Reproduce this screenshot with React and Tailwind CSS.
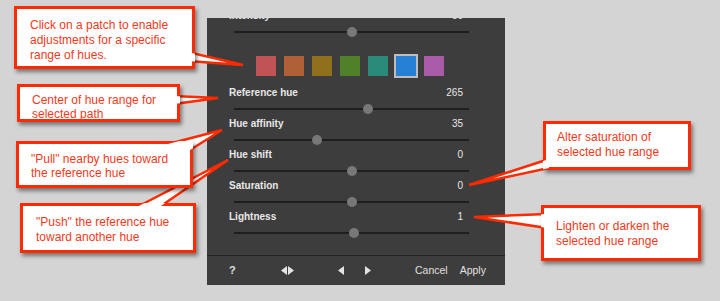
import React from 'react';

const RED = '#ff2a00';

const sliders = [
  { label: 'Reference hue', value: '265', left: 129 },
  { label: 'Hue affinity', value: '35', left: 78 },
  { label: 'Hue shift', value: '0', left: 113 },
  { label: 'Saturation', value: '0', left: 113 },
  { label: 'Lightness', value: '1', left: 115 },
];

const swatches = ['#c05353', '#b06036', '#8f701b', '#4f8228', '#2a8b7a', '#2681d5', '#a75ba9'];

// callout tails: polygon points + the box rect they clip into
const tails = [
  { pts: '188,52 188,61 243,65', box: [14, 6, 181, 63] },
  { pts: '174,96 174,104 218,98', box: [17, 84, 163, 38] },
  { pts: '135,208 158,208 228,160', box: [20, 203, 176, 50] },
  { pts: '168,144 190,150 222,130', box: [16, 141, 177, 47] },
  { pts: '549,159 549,168 469,185', box: [543, 121, 148, 49] },
  { pts: '547,214 547,228 474,217', box: [541, 205, 160, 56] },
];

function Slider({ label, value, left }) {
  return (
    <div className="h-[31px]">
      <div className="ml-[22px] w-[234px] h-[14px] flex items-center justify-between text-[10px] leading-[14px] text-[#e8e8e8]">
        <span className="font-bold">{label}</span>
        <span>{value}</span>
      </div>
      <div className="relative ml-[27px] w-[235px] h-[18px] flex items-center">
        <div className="w-full h-[2px] bg-[#1e1e1e]" />
        <div className="absolute top-[4px] w-[10px] h-[10px] rounded-full bg-[#787878]" style={{ left }} />
      </div>
    </div>
  );
}

function Callout({ className, children }) {
  return (
    <div className={`absolute bg-white border-[3px] border-[#ff2a00] shadow-[2px_3px_4px_rgba(0,0,0,0.45)] text-[12px] text-[#f5391b] ${className}`}>
      {children}
    </div>
  );
}

function Tri({ dir }) {
  return (
    <svg width="6" height="9" viewBox="0 0 6 9">
      <polygon points={dir === 'l' ? '6,0 6,9 0,4.5' : '0,0 0,9 6,4.5'} fill="#e4e4e4" />
    </svg>
  );
}

export default function App() {
  return (
    <div className="relative w-[720px] h-[301px] overflow-hidden bg-[#d4d4d4] font-['Liberation_Sans',Arial,sans-serif]">
      {/* Panel */}
      <div className="pt-[18px] pl-[207px]">
        <div className="w-[298px] h-[267px] flex flex-col bg-[#3d3d3d]">
          <div className="flex-1 overflow-hidden">
            <div className="mt-[-9px]">
              <Slider label="Intensity" value="50" left={113} />
              <div className="h-[46px] pt-[16px] pl-[49px] flex gap-[8px]">
                {swatches.map((c, i) => (
                  <div
                    key={c}
                    className={`w-[20px] h-[20px] ${i === 5 ? 'ring-2 ring-[#bdbdbd]' : ''}`}
                    style={{ background: c }}
                  />
                ))}
              </div>
              {sliders.map(s => <Slider key={s.label} {...s} />)}
            </div>
          </div>
          <div className="h-[30px] border-t border-[#242424] pl-[22px] flex items-center text-[10.5px] text-[#e0e0e0]">
            <span className="w-[52px] font-bold text-[11px]">?</span>
            <div className="flex gap-[1px]"><Tri dir="l" /><Tri dir="r" /></div>
            <div className="ml-[44px] flex gap-[21px]"><Tri dir="l" /><Tri dir="r" /></div>
            <span className="ml-[44px]">Cancel</span>
            <span className="ml-[12px]">Apply</span>
          </div>
        </div>
      </div>

      {/* Tails (stroked, below the boxes) */}
      <svg className="absolute inset-0" width="720" height="301">
        {tails.map((t, i) => (
          <polygon key={i} points={t.pts} fill="white" stroke={RED} strokeWidth="2.5" strokeLinejoin="miter" />
        ))}
      </svg>

      <Callout className="left-[14px] top-[6px] w-[181px] h-[63px] pl-[13px] pt-[9px] leading-[15px]">
        Click on a patch to enable<br />adjustments for a specific<br />range of hues.
      </Callout>
      <Callout className="left-[17px] top-[84px] w-[163px] h-[38px] pl-[12px] pt-[6px] leading-[14px]">
        Center of hue range for<br />selected path
      </Callout>
      <Callout className="left-[20px] top-[203px] w-[176px] h-[50px] pl-[13px] pt-[9px] leading-[14.5px]">
        "Push" the reference hue<br />toward another hue
      </Callout>
      <Callout className="left-[16px] top-[141px] w-[177px] h-[47px] pl-[12px] pt-[8px] leading-[14px]">
        "Pull" nearby hues toward<br />the reference hue
      </Callout>
      <Callout className="left-[543px] top-[121px] w-[148px] h-[49px] pl-[11px] pt-[6px] leading-[15px]">
        Alter saturation of<br />selected hue range
      </Callout>
      <Callout className="left-[541px] top-[205px] w-[160px] h-[56px] pl-[12px] pt-[11px] leading-[15px]">
        Lighten or darken the<br />selected hue range
      </Callout>

      {/* Tail joins: open the box border where each tail meets it */}
      <svg className="absolute inset-0 pointer-events-none" width="720" height="301">
        <defs>
          {tails.map((t, i) => (
            <clipPath key={i} id={`clip${i}`}>
              <rect x={t.box[0]} y={t.box[1]} width={t.box[2]} height={t.box[3]} />
            </clipPath>
          ))}
        </defs>
        {tails.map((t, i) => (
          <polygon key={i} points={t.pts} fill="white" clipPath={`url(#clip${i})`} />
        ))}
      </svg>
    </div>
  );
}
